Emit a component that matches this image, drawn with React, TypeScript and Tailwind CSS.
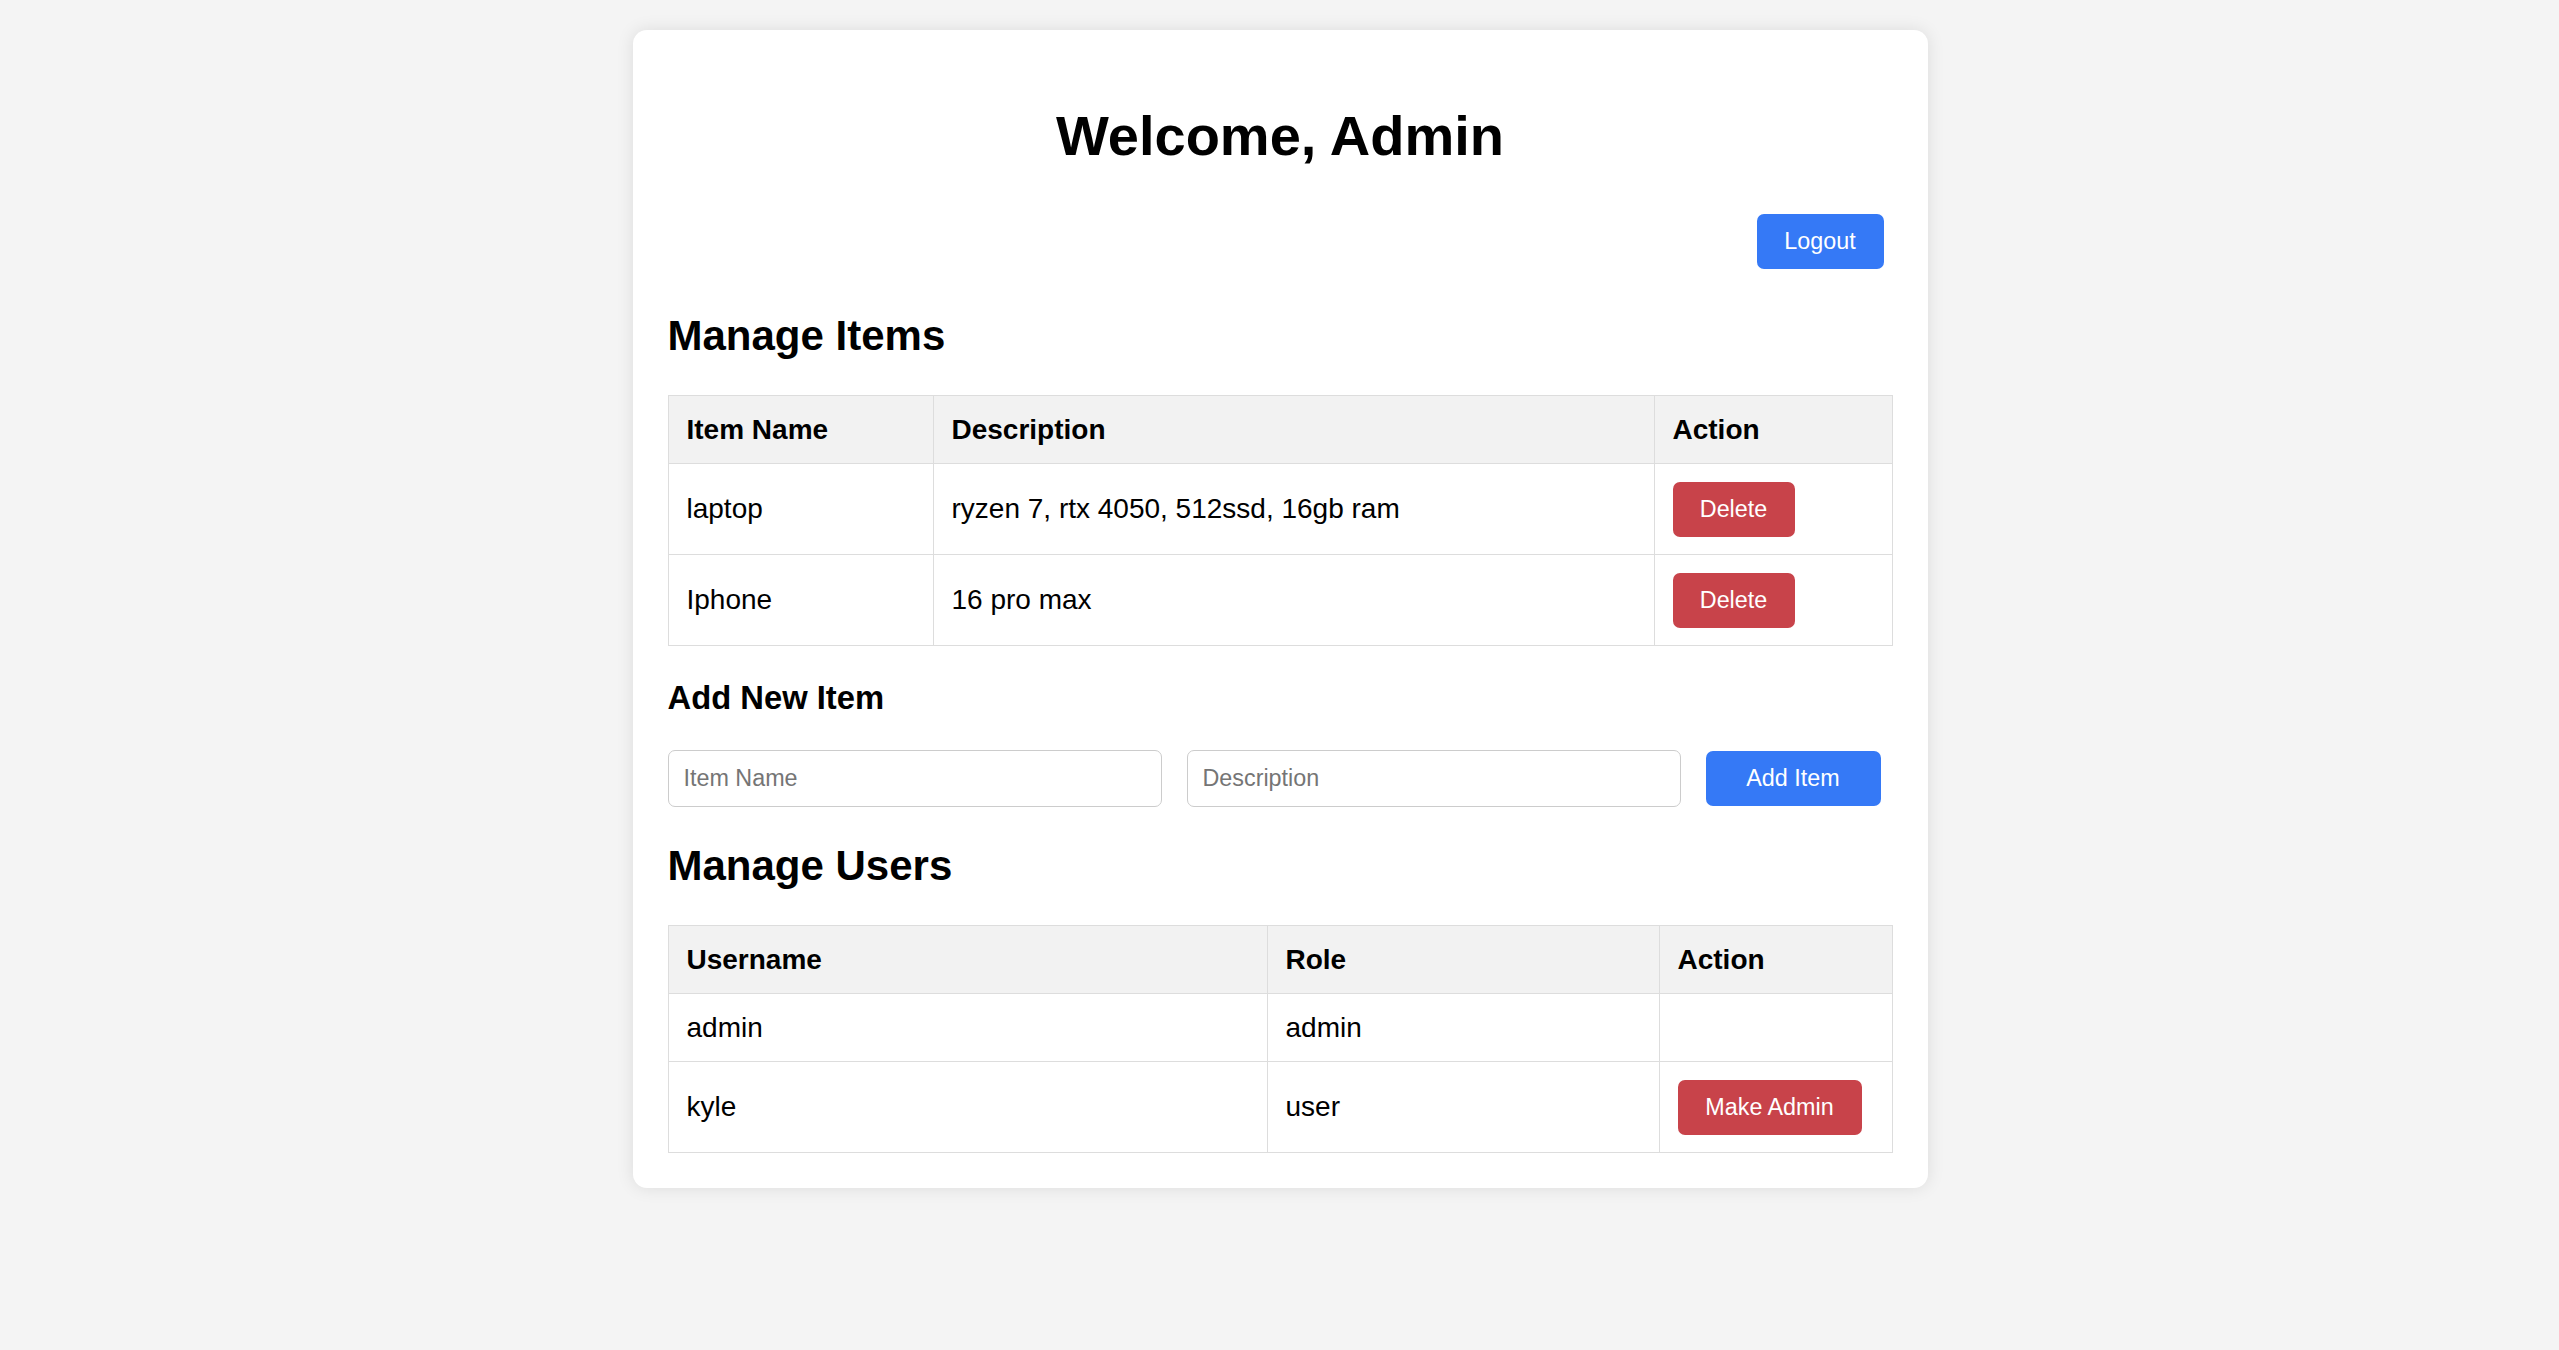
import React from "react";

const items = [
  { name: "laptop", desc: "ryzen 7, rtx 4050, 512ssd, 16gb ram" },
  { name: "Iphone", desc: "16 pro max" },
];

const users = [
  { name: "admin", role: "admin" },
  { name: "kyle", role: "user" },
];

function Cell({
  children,
  last,
  bottom,
  head,
  h,
}: {
  children?: React.ReactNode;
  last?: boolean;
  bottom?: boolean;
  head?: boolean;
  h: string;
}) {
  return (
    <div
      className={[
        "flex items-center border-t border-l border-[#dddddd] pl-[18px] text-[28px] leading-[32px]",
        last ? "border-r" : "",
        bottom ? "border-b" : "",
        head ? "bg-[#f2f2f2] font-bold" : "bg-white",
        h,
      ].join(" ")}
    >
      {children}
    </div>
  );
}

function RedButton({ label, w }: { label: string; w: string }) {
  return (
    <button
      className={
        "flex h-[55px] items-center justify-center rounded-[7px] bg-[#c8434a] text-[23.33px] leading-[27px] text-white " +
        w
      }
    >
      {label}
    </button>
  );
}

export default function App() {
  return (
    <div className="min-h-[1350px] bg-[#f4f4f4] pl-[1px] pt-[30px] font-['Liberation_Sans',Arial,sans-serif] text-black">
      <div className="mx-auto w-[1295px] rounded-[14px] bg-white p-[35px] shadow-[0_0_17px_rgba(0,0,0,0.1)]">
        <h1 className="mt-[38.6px] text-center text-[56px] font-bold leading-[64px]">
          Welcome, Admin
        </h1>

        <div className="mt-[46.4px] flex justify-end">
          <button className="mr-[9px] flex h-[55px] w-[127px] items-center justify-center rounded-[7px] bg-[#3579f6] text-[23.33px] leading-[27px] text-white">
            Logout
          </button>
        </div>

        <h2 className="mt-[43px] text-[42px] font-bold leading-[48px]">
          Manage Items
        </h2>

        <div className="mt-[35.4px] grid grid-cols-[265px_721px_239px]">
          <Cell head h="h-[68px]">Item Name</Cell>
          <Cell head h="h-[68px]">Description</Cell>
          <Cell head last h="h-[68px]">Action</Cell>
          {items.map((it, i) => {
            const b = i === items.length - 1;
            const h = b ? "h-[92px]" : "h-[91px]";
            return (
              <React.Fragment key={it.name}>
                <Cell bottom={b} h={h}>
                  {it.name}
                </Cell>
                <Cell bottom={b} h={h}>
                  {it.desc}
                </Cell>
                <Cell bottom={b} last h={h}>
                  <RedButton label="Delete" w="w-[122px]" />
                </Cell>
              </React.Fragment>
            );
          })}
        </div>

        <h3 className="mt-[32.4px] text-[32.76px] font-bold leading-[38px]">
          Add New Item
        </h3>

        <div className="mt-[33.3px] flex items-center">
          <input
            placeholder="Item Name"
            className="h-[57px] w-[494px] rounded-[7px] border border-[#cccccc] bg-white px-[15px] text-[23.33px] outline-none placeholder:text-[#757575]"
          />
          <input
            placeholder="Description"
            className="ml-[25px] h-[57px] w-[494px] rounded-[7px] border border-[#cccccc] bg-white px-[15px] text-[23.33px] outline-none placeholder:text-[#757575]"
          />
          <button className="ml-[25px] flex h-[55px] w-[175px] items-center justify-center rounded-[7px] bg-[#3579f6] text-[23.33px] leading-[27px] text-white">
            Add Item
          </button>
        </div>

        <h2 className="mt-[35.4px] text-[42px] font-bold leading-[48px]">
          Manage Users
        </h2>

        <div className="mt-[34.9px] grid grid-cols-[599px_392px_234px]">
          <Cell head h="h-[68px]">Username</Cell>
          <Cell head h="h-[68px]">Role</Cell>
          <Cell head last h="h-[68px]">Action</Cell>
          {users.map((u, i) => {
            const b = i === users.length - 1;
            const isUser = u.role !== "admin";
            const h = isUser ? (b ? "h-[92px]" : "h-[91px]") : b ? "h-[69px]" : "h-[68px]";
            return (
              <React.Fragment key={u.name}>
                <Cell bottom={b} h={h}>
                  {u.name}
                </Cell>
                <Cell bottom={b} h={h}>
                  {u.role}
                </Cell>
                <Cell bottom={b} last h={h}>
                  {isUser ? <RedButton label="Make Admin" w="w-[184px]" /> : null}
                </Cell>
              </React.Fragment>
            );
          })}
        </div>
      </div>
    </div>
  );
}
